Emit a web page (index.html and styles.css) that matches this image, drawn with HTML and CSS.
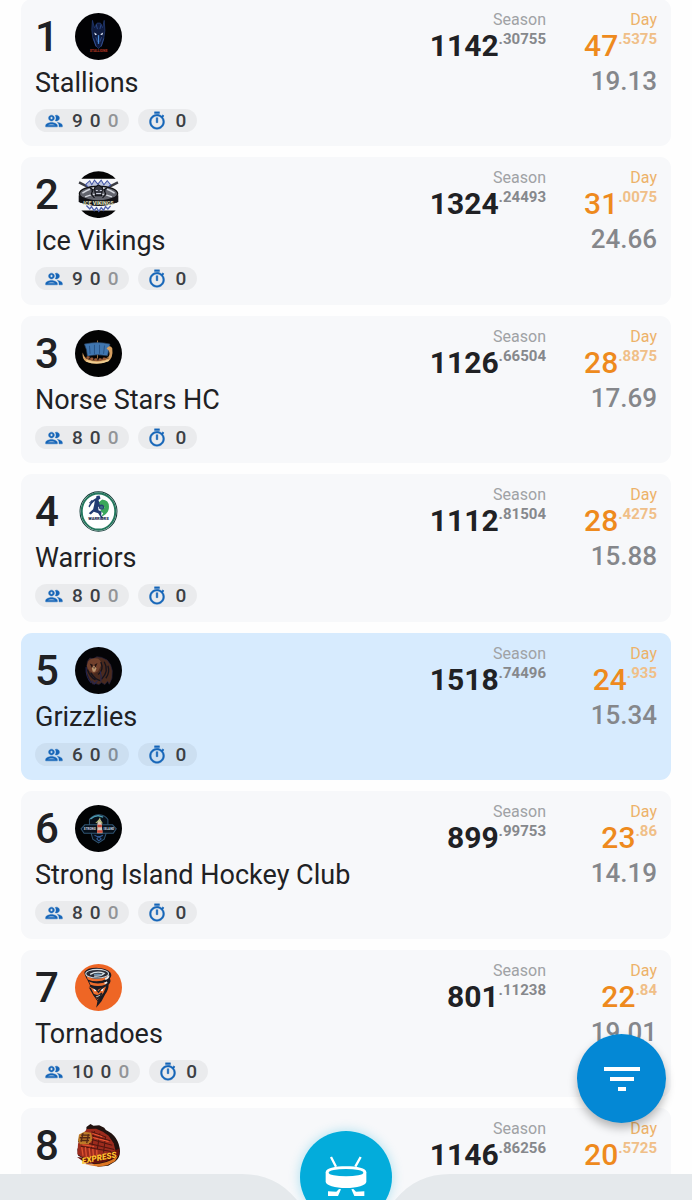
FILE: index.html
```html
<!DOCTYPE html>
<html lang="en">
<head>
<meta charset="utf-8">
<meta name="viewport" content="width=device-width, initial-scale=1">
<title>Standings</title>
<link rel="stylesheet" href="styles.css">
</head>
<body>
<svg class="sprite" aria-hidden="true">
  <symbol id="people" viewBox="0 0 24 24"><path d="M9 13.75c-2.34 0-7 1.17-7 3.5V19h14v-1.75c0-2.33-4.66-3.5-7-3.5zM4.34 17c.84-.58 2.87-1.25 4.66-1.25s3.82.67 4.66 1.25H4.34zM9 12c1.93 0 3.5-1.57 3.5-3.5S10.93 5 9 5 5.5 6.57 5.5 8.5 7.07 12 9 12zm0-5c.83 0 1.5.67 1.5 1.5S9.83 10 9 10s-1.5-.67-1.5-1.5S8.17 7 9 7zm7.04 6.81c1.16.84 1.96 1.96 1.96 3.44V19h4v-1.75c0-2.02-3.5-3.17-5.96-3.44zM15 12c1.93 0 3.5-1.57 3.5-3.5S16.93 5 15 5c-.54 0-1.04.13-1.5.35.63.89 1 1.98 1 3.15s-.37 2.26-1 3.15c.46.22.96.35 1.5.35z"/></symbol>
  <symbol id="timer" viewBox="0 0 24 24"><path d="M9 1h6v2H9zM19.03 7.39l1.42-1.42c-.43-.51-.9-.99-1.41-1.41l-1.42 1.42C16.07 4.74 14.12 4 12 4c-4.97 0-9 4.03-9 9s4.02 9 9 9 9-4.03 9-9c0-2.12-.74-4.07-1.97-5.61zM12 20c-3.87 0-7-3.13-7-7s3.13-7 7-7 7 3.13 7 7-3.13 7-7 7zM11 8h2v6h-2z"/></symbol>
</svg>

<main class="list">
  <article class="card">
    <div class="team">
      <div class="head"><span class="rank">1</span>
        <svg class="logo" viewBox="0 0 140 140" aria-hidden="true">
          <circle cx="70" cy="70" r="70" fill="#020204"/>
          <path d="M52 22l6 22 8-14 10 0 6 14 5-22 2 30-3 22-8 24-8 8-8-8-9-24-3-24z" fill="#101c40" stroke="#26417f" stroke-width="2"/>
          <path d="M63 34l4 14M78 34l-4 14M55 76l8 24M86 76l-8 24M62 72l5 14M79 72l-5 14" stroke="#3b5da8" stroke-width="2" fill="none"/>
          <path d="M70 66v26" stroke="#4a8bd8" stroke-width="4"/>
          <path d="M57 58l9 5-6 3zM84 58l-9 5 6 3z" fill="#e8eefc"/>
          <text x="70" y="116" class="mark" font-size="10" fill="#a93422">STALLIONS</text>
        </svg></div>
      <h2 class="name">Stallions</h2>
      <div class="chips"><span class="chip"><svg class="icon"><use href="#people"/></svg><span class="counts"><span>9</span><span>0</span><span class="dim">0</span></span></span><span class="chip"><svg class="icon"><use href="#timer"/></svg>0</span></div>
    </div>
    <div class="season"><span class="label">Season</span><strong class="score">1142<span class="frac">.30755</span></strong></div>
    <div class="day"><span class="label">Day</span><span class="score">47<span class="frac">.5375</span></span><span class="avg">19.13</span></div>
  </article>

  <article class="card">
    <div class="team">
      <div class="head"><span class="rank">2</span>
        <svg class="logo" viewBox="0 0 140 140" aria-hidden="true">
          <path d="M19 23a70 70 0 0 1 102 0zM19 118a70 70 0 0 0 102 0z" fill="#050505"/>
          <path d="M12 34l114 58M128 34L14 92" stroke="#3b3c42" stroke-width="7"/>
          <path d="M32 40l12-11 6 12 8-14 10 12 10-12 8 14 10-12 10 12-16 16H46z" fill="#bfc7df" stroke="#4355a4" stroke-width="3"/>
          <ellipse cx="70" cy="68" rx="57" ry="23" fill="#62646d" stroke="#111" stroke-width="4"/>
          <path d="M22 66q48-34 96 0M30 77q40-18 80 0" fill="none" stroke="#d5d8df" stroke-width="4"/>
          <path d="M42 48l12 8-6 14 10 10M98 48l-12 8 6 14-10 10M58 50l12-9 12 9-3 24H61z" fill="#383a44" stroke="#0c0d12" stroke-width="3"/>
          <path d="M62 58h6M74 58h6M63 67h15" stroke="#c7ccda" stroke-width="3"/>
          <path d="M11 72q58 30 118 0v20q-59 24-118 0z" fill="#121216"/>
          <text x="70" y="101" class="mark" font-size="16" fill="#d8d9b5">ICE VIKINGS</text>
          <path d="M34 103l10 10 5-7 8 12 7-9 7 11 7-11 7 8 6-11 7 7 8-9" fill="none" stroke="#5063ae" stroke-width="4"/>
        </svg></div>
      <h2 class="name">Ice Vikings</h2>
      <div class="chips"><span class="chip"><svg class="icon"><use href="#people"/></svg><span class="counts"><span>9</span><span>0</span><span class="dim">0</span></span></span><span class="chip"><svg class="icon"><use href="#timer"/></svg>0</span></div>
    </div>
    <div class="season"><span class="label">Season</span><strong class="score">1324<span class="frac">.24493</span></strong></div>
    <div class="day"><span class="label">Day</span><span class="score">31<span class="frac">.0075</span></span><span class="avg">24.66</span></div>
  </article>

  <article class="card">
    <div class="team">
      <div class="head"><span class="rank">3</span>
        <svg class="logo" viewBox="0 0 140 140" aria-hidden="true">
          <circle cx="70" cy="70" r="70" fill="#030303"/>
          <path d="M67 31v54" stroke="#9b7042" stroke-width="3"/>
          <path d="M28 42q40-9 76 0l-7 35q-30-7-60 1-1-20-9-36z" fill="#4076b0" stroke="#2b4565" stroke-width="2"/>
          <path d="M43 47l2 24M58 44v28M73 44v27M88 46l-3 25" stroke="#2a5588" stroke-width="3"/>
          <path d="M23 67q5 18 16 20 32 9 58-5 9-6 4-20l-7-7q10-12 17-1 4 30-14 40-34 13-65 0-12-10-9-27z" fill="#d7a061"/>
          <path d="M31 83q33 16 70 0" fill="none" stroke="#704326" stroke-width="3"/>
          <path d="M38 82h2m9 4h2m10 2h2m11 0h2m10-2h2" stroke="#9a5a38" stroke-width="8" stroke-linecap="round"/>
          <path d="M34 92q34 12 67-2" fill="none" stroke="#efce91" stroke-width="5"/>
        </svg></div>
      <h2 class="name">Norse Stars HC</h2>
      <div class="chips"><span class="chip"><svg class="icon"><use href="#people"/></svg><span class="counts"><span>8</span><span>0</span><span class="dim">0</span></span></span><span class="chip"><svg class="icon"><use href="#timer"/></svg>0</span></div>
    </div>
    <div class="season"><span class="label">Season</span><strong class="score">1126<span class="frac">.66504</span></strong></div>
    <div class="day"><span class="label">Day</span><span class="score">28<span class="frac">.8875</span></span><span class="avg">17.69</span></div>
  </article>

  <article class="card">
    <div class="team">
      <div class="head"><span class="rank">4</span>
        <svg class="logo" viewBox="0 0 140 140" aria-hidden="true">
          <ellipse cx="70" cy="70" rx="55" ry="59" fill="#fff" stroke="#123a36" stroke-width="3"/>
          <ellipse cx="70" cy="70" rx="50" ry="54" fill="none" stroke="#25785e" stroke-width="6"/>
          <path d="M81 34q22 2 20 25-1 15-15 23l-8 4 6-11-9-7 13-11-13-5-5-9z" fill="#3ba75b"/>
          <path d="M64 24l9-2 3 9-6 5 4 13 10 9-5 5-10-8 1 11 9 4-1 11 7 8-5 3-11-17-13-4-9 8-6-4 13-12 3-12 2-13-9 9-7 11-3-4 9-15 14-9z" fill="#223c74"/>
          <path d="M43 45l8-8" stroke="#263d73" stroke-width="3"/>
          <circle cx="79" cy="57" r="6" fill="#3a6f86" stroke="#263d73" stroke-width="3"/>
          <text x="70" y="95" class="mark" font-size="12" fill="#20264c">WARRIORS</text>
        </svg></div>
      <h2 class="name">Warriors</h2>
      <div class="chips"><span class="chip"><svg class="icon"><use href="#people"/></svg><span class="counts"><span>8</span><span>0</span><span class="dim">0</span></span></span><span class="chip"><svg class="icon"><use href="#timer"/></svg>0</span></div>
    </div>
    <div class="season"><span class="label">Season</span><strong class="score">1112<span class="frac">.81504</span></strong></div>
    <div class="day"><span class="label">Day</span><span class="score">28<span class="frac">.4275</span></span><span class="avg">15.88</span></div>
  </article>

  <article class="card selected">
    <div class="team">
      <div class="head"><span class="rank">5</span>
        <svg class="logo" viewBox="0 0 140 140" aria-hidden="true">
          <circle cx="70" cy="70" r="70" fill="#040407"/>
          <path d="M37 43l7-10 10 2 11-6 14 2 17 8 10 14 5 18-1 22-8 18-5-9-8 10-10-6-8 6-9-3-9 2-10-14-9-22z" fill="#4a2a1e" stroke="#252341" stroke-width="2"/>
          <path d="M39 43q12-14 30-8 12 8 8 21l-8 16-14 7-14-9-6-14z" fill="#71402c"/>
          <path d="M44 49l9 4-2 10zM67 48l-9 5 3 8z" fill="#1f1112"/>
          <path d="M50 63l6-7 8 7-4 11h-7z" fill="#bd966e"/>
          <path d="M54 61h6l-3 4z" fill="#181317"/>
          <path d="M37 67q7 22 24 31M47 77q13 20 28 23M77 45q10 23-8 37M87 44q16 28-8 52M98 56q7 20-6 37" fill="none" stroke="#15131c" stroke-width="4"/>
          <path d="M33 60q-2 29 15 47M50 100l8 10 9-10M75 72q5 14 2 31" fill="none" stroke="#252650" stroke-width="3"/>
        </svg></div>
      <h2 class="name">Grizzlies</h2>
      <div class="chips"><span class="chip"><svg class="icon"><use href="#people"/></svg><span class="counts"><span>6</span><span>0</span><span class="dim">0</span></span></span><span class="chip"><svg class="icon"><use href="#timer"/></svg>0</span></div>
    </div>
    <div class="season"><span class="label">Season</span><strong class="score">1518<span class="frac">.74496</span></strong></div>
    <div class="day"><span class="label">Day</span><span class="score">24<span class="frac">.935</span></span><span class="avg">15.34</span></div>
  </article>

  <article class="card">
    <div class="team">
      <div class="head"><span class="rank">6</span>
        <svg class="logo" viewBox="0 0 140 140" aria-hidden="true">
          <circle cx="70" cy="70" r="70" fill="#020304"/>
          <path d="M43 59V43q12-15 30-14 17 1 25 14v16M29 59h83l11 12-9 13H27L18 71zM48 84l5 18 17 11 17-11 6-18" fill="#07101a" stroke="#305573" stroke-width="3"/>
          <path d="M46 42q12-11 24-10l14 4" fill="none" stroke="#4e9db3" stroke-width="4"/>
          <text x="44" y="75" class="mark" font-size="9" fill="#bdc6d6">STRONG</text>
          <text x="101" y="75" class="mark" font-size="9" fill="#bdc6d6">ISLAND</text>
          <path d="M67 48l6-8 6 8 3 36H66z" fill="#d9c6b8"/>
          <path d="M67 59h13v7H67zM66 75h16v8H66z" fill="#cb4938"/>
          <path d="M62 53l10-7 10 9M74 38v10" stroke="#aebc75" stroke-width="3" fill="none"/>
          <path d="M58 90q12 9 25 0M65 101l6-7 7 7-7 6z" stroke="#315c99" stroke-width="3" fill="none"/>
        </svg></div>
      <h2 class="name">Strong Island Hockey Club</h2>
      <div class="chips"><span class="chip"><svg class="icon"><use href="#people"/></svg><span class="counts"><span>8</span><span>0</span><span class="dim">0</span></span></span><span class="chip"><svg class="icon"><use href="#timer"/></svg>0</span></div>
    </div>
    <div class="season"><span class="label">Season</span><strong class="score">899<span class="frac">.99753</span></strong></div>
    <div class="day"><span class="label">Day</span><span class="score">23<span class="frac">.86</span></span><span class="avg">14.19</span></div>
  </article>

  <article class="card">
    <div class="team">
      <div class="head"><span class="rank">7</span>
        <svg class="logo" viewBox="0 0 140 140" aria-hidden="true">
          <circle cx="70" cy="70" r="70" fill="#ee6625"/>
          <path d="M28 24q8-13 35-13 34 1 43 15 5 9-2 17 5 10-4 19 1 14-10 28L79 111l-16 19 4-19-13-19-13-23 8 4-12-25q-9-15-9-24z" fill="#1b1a22"/>
          <path d="M34 34q30 20 65 2l-3 8q-30 14-58 2zM42 52q26 12 54 0l-4 9q-22 9-46 1z" fill="#ee6d2d"/>
          <path d="M45 67l13 8 8 3 9-5 18-7-8 20-18 22-10-17z" fill="#ee6d2d"/>
          <ellipse cx="66" cy="29" rx="34" ry="13" fill="#2a2c36" stroke="#cfdae2" stroke-width="3"/>
          <path d="M45 31q20-12 42-3-10 10-30 8" fill="none" stroke="#d9e3e8" stroke-width="4"/>
          <ellipse cx="68" cy="31" rx="12" ry="3" fill="#6d93b1"/>
          <path d="M90 45q10-3 10-11M88 58l8-4" stroke="#e7edf0" stroke-width="5" fill="none"/>
          <path d="M52 71l15 8-8 3zM86 69l-12 9 8 3z" fill="#fff"/>
          <path d="M56 91q14 7 24-5-3 14-16 13z" fill="#e8f0f3" stroke="#191b22" stroke-width="3"/>
          <path d="M44 65l18 10 8 9 6-8 18-14M64 105l11-7-6 17" stroke="#202027" stroke-width="4" fill="none"/>
        </svg></div>
      <h2 class="name">Tornadoes</h2>
      <div class="chips"><span class="chip"><svg class="icon"><use href="#people"/></svg><span class="counts"><span>10</span><span>0</span><span class="dim">0</span></span></span><span class="chip"><svg class="icon"><use href="#timer"/></svg>0</span></div>
    </div>
    <div class="season"><span class="label">Season</span><strong class="score">801<span class="frac">.11238</span></strong></div>
    <div class="day"><span class="label">Day</span><span class="score">22<span class="frac">.84</span></span><span class="avg">19.01</span></div>
  </article>

  <article class="card">
    <div class="team">
      <div class="head"><span class="rank">8</span>
        <svg class="logo" viewBox="0 0 140 140" aria-hidden="true">
          <path d="M34 15l12-9 9 5 17-1 15 7 5 7q39 18 42 63 0 19-13 30l-22 13-30 3-31-17L9 100 7 82l6-18-4-7 7-20 18-5z" fill="#22120f"/>
          <path d="M36 21l27-1 20 9 17 12 15 22 7 27-86 23-29-17 2-31 12-27z" fill="#9c2b1d"/>
          <path d="M12 37l16-8 20 3 4 20-10 14H15l-6-11z" fill="#bd7b28"/>
          <path d="M18 39h26M14 47h31M16 55h26M24 33l-6 26M40 36l-5 27" stroke="#572814" stroke-width="4"/>
          <path d="M49 29l44 16M51 40l54 16M50 52l61 17M42 64l75 18M17 72l91 16M58 27l-9 50M74 34l-8 50M91 44l-6 47" stroke="#51160f" stroke-width="3"/>
          <path d="M52 34l29 10M53 46l47 12M22 68l35 5" stroke="#ef5833" stroke-width="3"/>
          <path d="M20 75l4 25M31 75l3 29M42 77l3 25M53 80l2 22M65 83v17" stroke="#dd5130" stroke-width="4"/>
          <path d="M6 104q59 10 126-25v20Q86 128 34 124z" fill="#64130e"/>
          <text x="73" y="115" class="mark express" font-size="25" fill="#ffc22c" transform="rotate(-11 73 112)">EXPRESS</text>
          <path d="M28 124q56 9 100-23l-9 16-23 12-25 4-27-4z" fill="#dd7622"/>
        </svg></div>
    </div>
    <div class="season"><span class="label">Season</span><strong class="score">1146<span class="frac">.86256</span></strong></div>
    <div class="day"><span class="label">Day</span><span class="score">20<span class="frac">.5725</span></span></div>
  </article>
</main>

<button class="filter" type="button" aria-label="Filter">
  <svg viewBox="0 0 24 24" width="48" height="48" fill="#fff"><path d="M10 18h4v-2h-4v2zM3 6v2h18V6H3zm3 7h12v-2H6v2z"/></svg>
</button>

<nav class="bar">
  <span class="side"></span>
  <svg class="notch" viewBox="0 0 208 26" width="208" height="26" aria-hidden="true"><path d="M0 0C22 0 40 8 55 26H0zM208 0C186 0 168 8 153 26h55z" fill="#e5e9ec"/></svg>
  <span class="side"></span>
  <button class="drum" type="button" aria-label="Play">
    <svg viewBox="0 0 126 126" width="42" height="42" aria-hidden="true">
      <path d="M18 3l15 29M107 3L91 32" stroke="#fff" stroke-width="7" fill="none"/>
      <path d="M2 49c0-13 28-18 61-18s61 5 61 18v28c0 11-28 19-61 19S2 88 2 77z" fill="#fff"/>
      <ellipse cx="63" cy="50" rx="52" ry="11" fill="#03acdb"/>
      <path d="M48 100l-9 20H9v-14l25 1 8-8zM79 100l9 20h30v-14l-25 1-8-8z" fill="#fff"/>
    </svg>
  </button>
</nav>
</body>
</html>
```
FILE: styles.css
```css
* { box-sizing: border-box; }

body {
  margin: 0;
  height: 100vh;
  overflow: hidden;
  background: #fefefe;
  color: #202124;
  font-family: Roboto, "Liberation Sans", sans-serif;
}

.sprite { display: none; }

.list {
  display: flex;
  flex-direction: column;
  gap: 11px;
  margin-top: -1px;
  padding: 0 21px;
}

.card {
  display: flex;
  min-height: 147px;
  padding: 11px 14px 14px;
  border-radius: 11px;
  background: #f7f8fa;
}
.card:nth-child(even) { padding-bottom: 15px; }
.card.selected { background: #d7ebfe; }

.team { flex: 1; min-width: 0; }

.head {
  display: flex;
  align-items: center;
  gap: 16px;
  padding-top: 3px;
}
.rank {
  width: 24px;
  font-size: 42px;
  line-height: 46px;
  font-weight: 500;
}
.logo { width: 47px; height: 47px; }
.mark {
  font-family: Roboto, sans-serif;
  font-weight: 900;
  text-anchor: middle;
}
.express { font-style: italic; }

.name {
  margin: 7px 0 10px;
  font-size: 27px;
  line-height: 32px;
  font-weight: 400;
}

.chips { display: flex; gap: 9px; }
.chip {
  display: flex;
  align-items: center;
  gap: 8px;
  height: 23px;
  padding: 0 11px 0 9px;
  border-radius: 12px;
  background: rgba(0, 0, 0, 0.05);
  color: #3c3f44;
  font-size: 19px;
  line-height: 23px;
  font-weight: 500;
}
.counts { display: flex; gap: 7px; }
.dim { opacity: 0.5; }
.icon {
  width: 20px;
  height: 20px;
  fill: #1565b8;
  stroke: #1565b8;
  stroke-width: 0.5;
}

.season, .day {
  display: flex;
  flex-direction: column;
  align-items: flex-end;
}
.day { width: 111px; color: #ee8a1d; }
.label {
  font-size: 16px;
  line-height: 20px;
  color: #a0a2a5;
}
.day .label { color: #edb269; }
.score {
  display: flex;
  align-items: flex-start;
  padding-top: 1px;
  font-size: 30px;
  line-height: 30px;
  font-weight: 700;
}
.day .score { font-weight: 500; }
.frac {
  font-size: 15px;
  line-height: 16px;
  font-weight: 700;
  color: #86888c;
}
.day .frac { color: #f0bf88; }
.avg {
  margin-top: 6px;
  font-size: 26px;
  line-height: 28px;
  font-weight: 500;
  color: #85878b;
}

button {
  display: grid;
  place-items: center;
  padding: 0;
  border: 0;
  border-radius: 50%;
}

.filter {
  position: fixed;
  right: 26px;
  bottom: 77px;
  width: 89px;
  height: 89px;
  background: #0488d5;
  box-shadow: 0 5px 10px rgba(0, 0, 0, 0.28);
}

.bar {
  position: fixed;
  left: 0;
  right: 0;
  bottom: 0;
  display: flex;
  height: 26px;
}
.side { flex: 1; background: #e5e9ec; }
.notch { display: block; }
.drum {
  position: absolute;
  top: -43px;
  left: 50%;
  width: 92px;
  height: 92px;
  margin-left: -46px;
  background: #03acdb;
  box-shadow: 0 0 12px rgba(3, 172, 219, 0.3);
}
```
